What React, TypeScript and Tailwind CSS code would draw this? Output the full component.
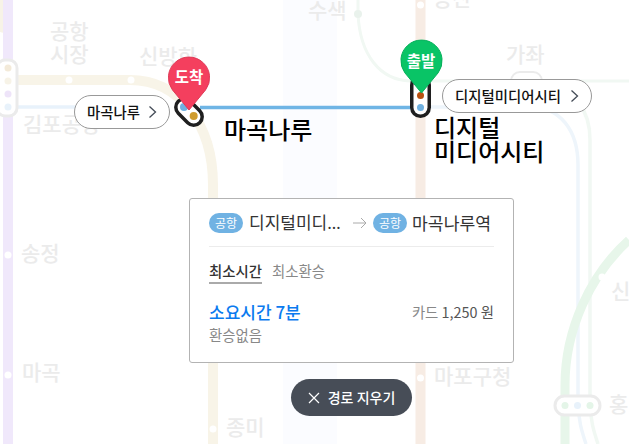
const kr = "font-['Noto_Sans_CJK_KR','Noto_Sans',sans-serif]";

const mapLabels: [string, number, number][] = [
  ["공항", 50, 39],
  ["시장", 50, 62],
  ["신방화", 139, 64],
  ["김포공항", 23, 132],
  ["수색", 308, 18],
  ["증산", 433, 6],
  ["가좌", 506, 62],
  ["송정", 21, 261],
  ["마곡", 22, 380],
  ["종미", 226, 435],
  ["마포구청", 434, 384],
  ["신", 611, 299],
  ["홍", 609, 412],
];

const whiteDots: [number, number][] = [
  [69, 80],
  [131, 80],
  [8, 255],
  [8, 375],
  [213, 429],
  [420.5, 5],
  [420.5, 378],
  [602, 277],
];

function MapLines() {
  return (
    <svg className="absolute inset-0" width="629" height="444" fill="none">
      <rect x="283" y="0" width="54" height="444" fill="#fbfcff" />
      <path d="M0 0 C2 10 3 20 0 32" stroke="#f7f3e7" strokeWidth="6" />
      <path d="M8 0 V444" stroke="#f0e8fb" strokeWidth="10" />
      <path d="M420.5 0 V444" stroke="#f7ece4" strokeWidth="10" />
      <path d="M17 80 H130 C180 80 213 125 213 185 V444" stroke="#f8f4e8" strokeWidth="10" />
      <path d="M17 107 H80" stroke="#e8f2fb" strokeWidth="3.5" />
      <path d="M430 107 H530 C560 107 578 130 578 165 V400 C578 420 582 432 586 444" stroke="#eef5fb" strokeWidth="3.5" />
      <path d="M358 0 V14 C360 55 380 80 410 81 H629" stroke="#f1f8f3" strokeWidth="3" />
      <path d="M545 81 C575 90 590 110 590 140 V400 C590 420 594 432 598 444" stroke="#f1f8f3" strokeWidth="3.5" />
      <circle cx="358" cy="14" r="4" fill="#e9f2ec" />
      <path d="M565 444 V385 C565 330 590 275 629 240" stroke="#e7f6ea" strokeWidth="9" />

      {whiteDots.map(([x, y]) => (
        <circle key={`${x}-${y}`} cx={x} cy={y} r="3.5" fill="#ffffff" />
      ))}

      {/* 환승역 캡슐 */}
      <rect x="-3" y="60" width="20" height="56" rx="8" fill="#ffffff" stroke="#ebebeb" strokeWidth="3" />
      <circle cx="8" cy="68" r="3.5" fill="#f3ead9" />
      <circle cx="8" cy="81" r="3.5" fill="#f7f3e7" />
      <circle cx="8" cy="94" r="3.5" fill="#eee4f9" />
      <circle cx="8" cy="107" r="3.5" fill="#e8f2fb" />

      <rect x="511" y="72" width="31" height="24" rx="9" fill="#ffffff" stroke="#ebebeb" strokeWidth="2" />

      <rect x="555" y="396" width="45" height="19" rx="9.5" fill="#ffffff" stroke="#ebebeb" strokeWidth="3" />
      <circle cx="565" cy="405.5" r="3.5" fill="#e4f5e8" />
      <circle cx="577.5" cy="405.5" r="3.5" fill="#e8f2fb" />
      <circle cx="590" cy="405.5" r="3.5" fill="#e4f5e8" />

      {mapLabels.map(([label, x, y]) => (
        <text key={label} x={x} y={y} fontSize="21" fill="#ebebeb" fontFamily="'Noto Sans CJK KR', sans-serif" fontWeight="500">
          {label}
        </text>
      ))}

      {/* 선택 경로 */}
      <path d="M200 107.5 H411" stroke="#6fb5e5" strokeWidth="3.5" />

      <path d="M184.3 107.3 L193.7 116.7" stroke="#1f1f1f" strokeWidth="20.5" strokeLinecap="round" />
      <path d="M184.3 107.3 L193.7 116.7" stroke="#ffffff" strokeWidth="13.5" strokeLinecap="round" />
      <circle cx="184" cy="107" r="4" fill="#6fb0e0" />
      <circle cx="193.7" cy="116" r="4" fill="#cf9c2e" />

      <path d="M420.5 85 V107.5" stroke="#1f1f1f" strokeWidth="21" strokeLinecap="round" />
      <path d="M420.5 85 V107.5" stroke="#ffffff" strokeWidth="14" strokeLinecap="round" />
      <circle cx="420.5" cy="95.5" r="3.5" fill="#b8500f" />
      <circle cx="420.5" cy="107.5" r="3.5" fill="#6fb0e0" />

      {/* 핀 */}
      <path d="M189 110 L172.5 90 A20.6 20.6 0 1 1 205.5 90 Z" fill="#f43f5e" stroke="#df3a56" strokeWidth="1" />
      <path d="M421.5 93 L405 73 A20.6 20.6 0 1 1 438 73 Z" fill="#09c466" stroke="#08b05c" strokeWidth="1" />
    </svg>
  );
}

function StationPill({ name, className }: { name: string; className: string }) {
  return (
    <div className={`absolute flex h-[34px] items-center justify-between rounded-full border border-[#999999] bg-white pl-3 pr-3 text-[14.4px] font-medium text-[#111111] ${className}`}>
      <span>{name}</span>
      <svg width="9" height="14" viewBox="0 0 9 14" fill="none" stroke="#444c57" strokeWidth="1.3">
        <path d="M1.5 1.5 L7.5 7 L1.5 12.5" />
      </svg>
    </div>
  );
}

function AirportBadge() {
  return (
    <span className="flex h-[20px] w-[34px] shrink-0 items-center justify-center rounded-full bg-[#70b2e3] text-[12px] text-white">
      공항
    </span>
  );
}

export default function App() {
  return (
    <div className={`relative h-[444px] w-[629px] overflow-hidden bg-white ${kr}`}>
      <MapLines />

      <span className="absolute left-[174px] top-[65px] w-[30px] text-center text-[15.5px] leading-[22px] font-bold text-white">도착</span>
      <span className="absolute left-[406px] top-[49px] w-[30px] text-center text-[15.5px] leading-[22px] font-bold text-white">출발</span>

      <StationPill name="마곡나루" className="left-[74px] top-[95px] w-[96px]" />
      <StationPill name="디지털미디어시티" className="left-[442px] top-[79px] w-[150px]" />

      <div className="absolute left-[224px] top-[114px] text-[24px] leading-[30px] font-medium text-black">마곡나루</div>
      <div className="absolute left-[434px] top-[115px] text-[24px] leading-[24px] font-medium text-black">
        디지털
        <br />
        미디어시티
      </div>

      {/* 경로 카드 */}
      <div className="absolute left-[189px] top-[198px] flex h-[165px] w-[325px] flex-col rounded-[3px] border border-[#b3b3b3] bg-white px-[19px] pt-[14px]">
        <div className="flex h-[20px] items-center">
          <AirportBadge />
          <span className="ml-[6px] w-[96px] truncate font-['Noto_Sans','Noto_Sans_CJK_KR',sans-serif] text-[17px] text-[#333333]">디지털미디어시티</span>
          <svg className="ml-[8px] mr-[6px]" width="14" height="12" viewBox="0 0 14 12" fill="none" stroke="#aaaaaa" strokeWidth="1">
            <path d="M0 6 H13 M8 1 L13 6 L8 11" />
          </svg>
          <AirportBadge />
          <span className="ml-[5px] text-[17.2px] text-[#333333]">마곡나루역</span>
        </div>
        <div className="mt-[13px] h-px bg-[#ececec]" />
        <div className="mt-[13px] flex gap-[10px] text-[14.4px]">
          <span className="h-[24px] border-b-2 border-[#aaaaaa] font-medium text-[#333333]">최소시간</span>
          <span className="text-[#888888]">최소환승</span>
        </div>
        <div className="mt-[15px] flex items-center justify-between">
          <span className="text-[17px] leading-[26px] font-medium text-[#0b7bef]">소요시간 7분</span>
          <span className="text-[14.4px] text-[#888888]">
            카드 <span className="text-[#555555]">1,250 원</span>
          </span>
        </div>
        <div className="text-[14.4px] leading-[20px] text-[#888888]">환승없음</div>
      </div>

      {/* 경로 지우기 */}
      <button className="absolute left-[291px] top-[379px] flex h-[37px] w-[121px] items-center justify-center gap-[8px] rounded-full bg-[#474d57] text-[14px] font-medium text-white">
        <svg width="12" height="12" viewBox="0 0 12 12" fill="none" stroke="#ffffff" strokeWidth="1.2">
          <path d="M1 1 L11 11 M11 1 L1 11" />
        </svg>
        경로 지우기
      </button>
    </div>
  );
}
